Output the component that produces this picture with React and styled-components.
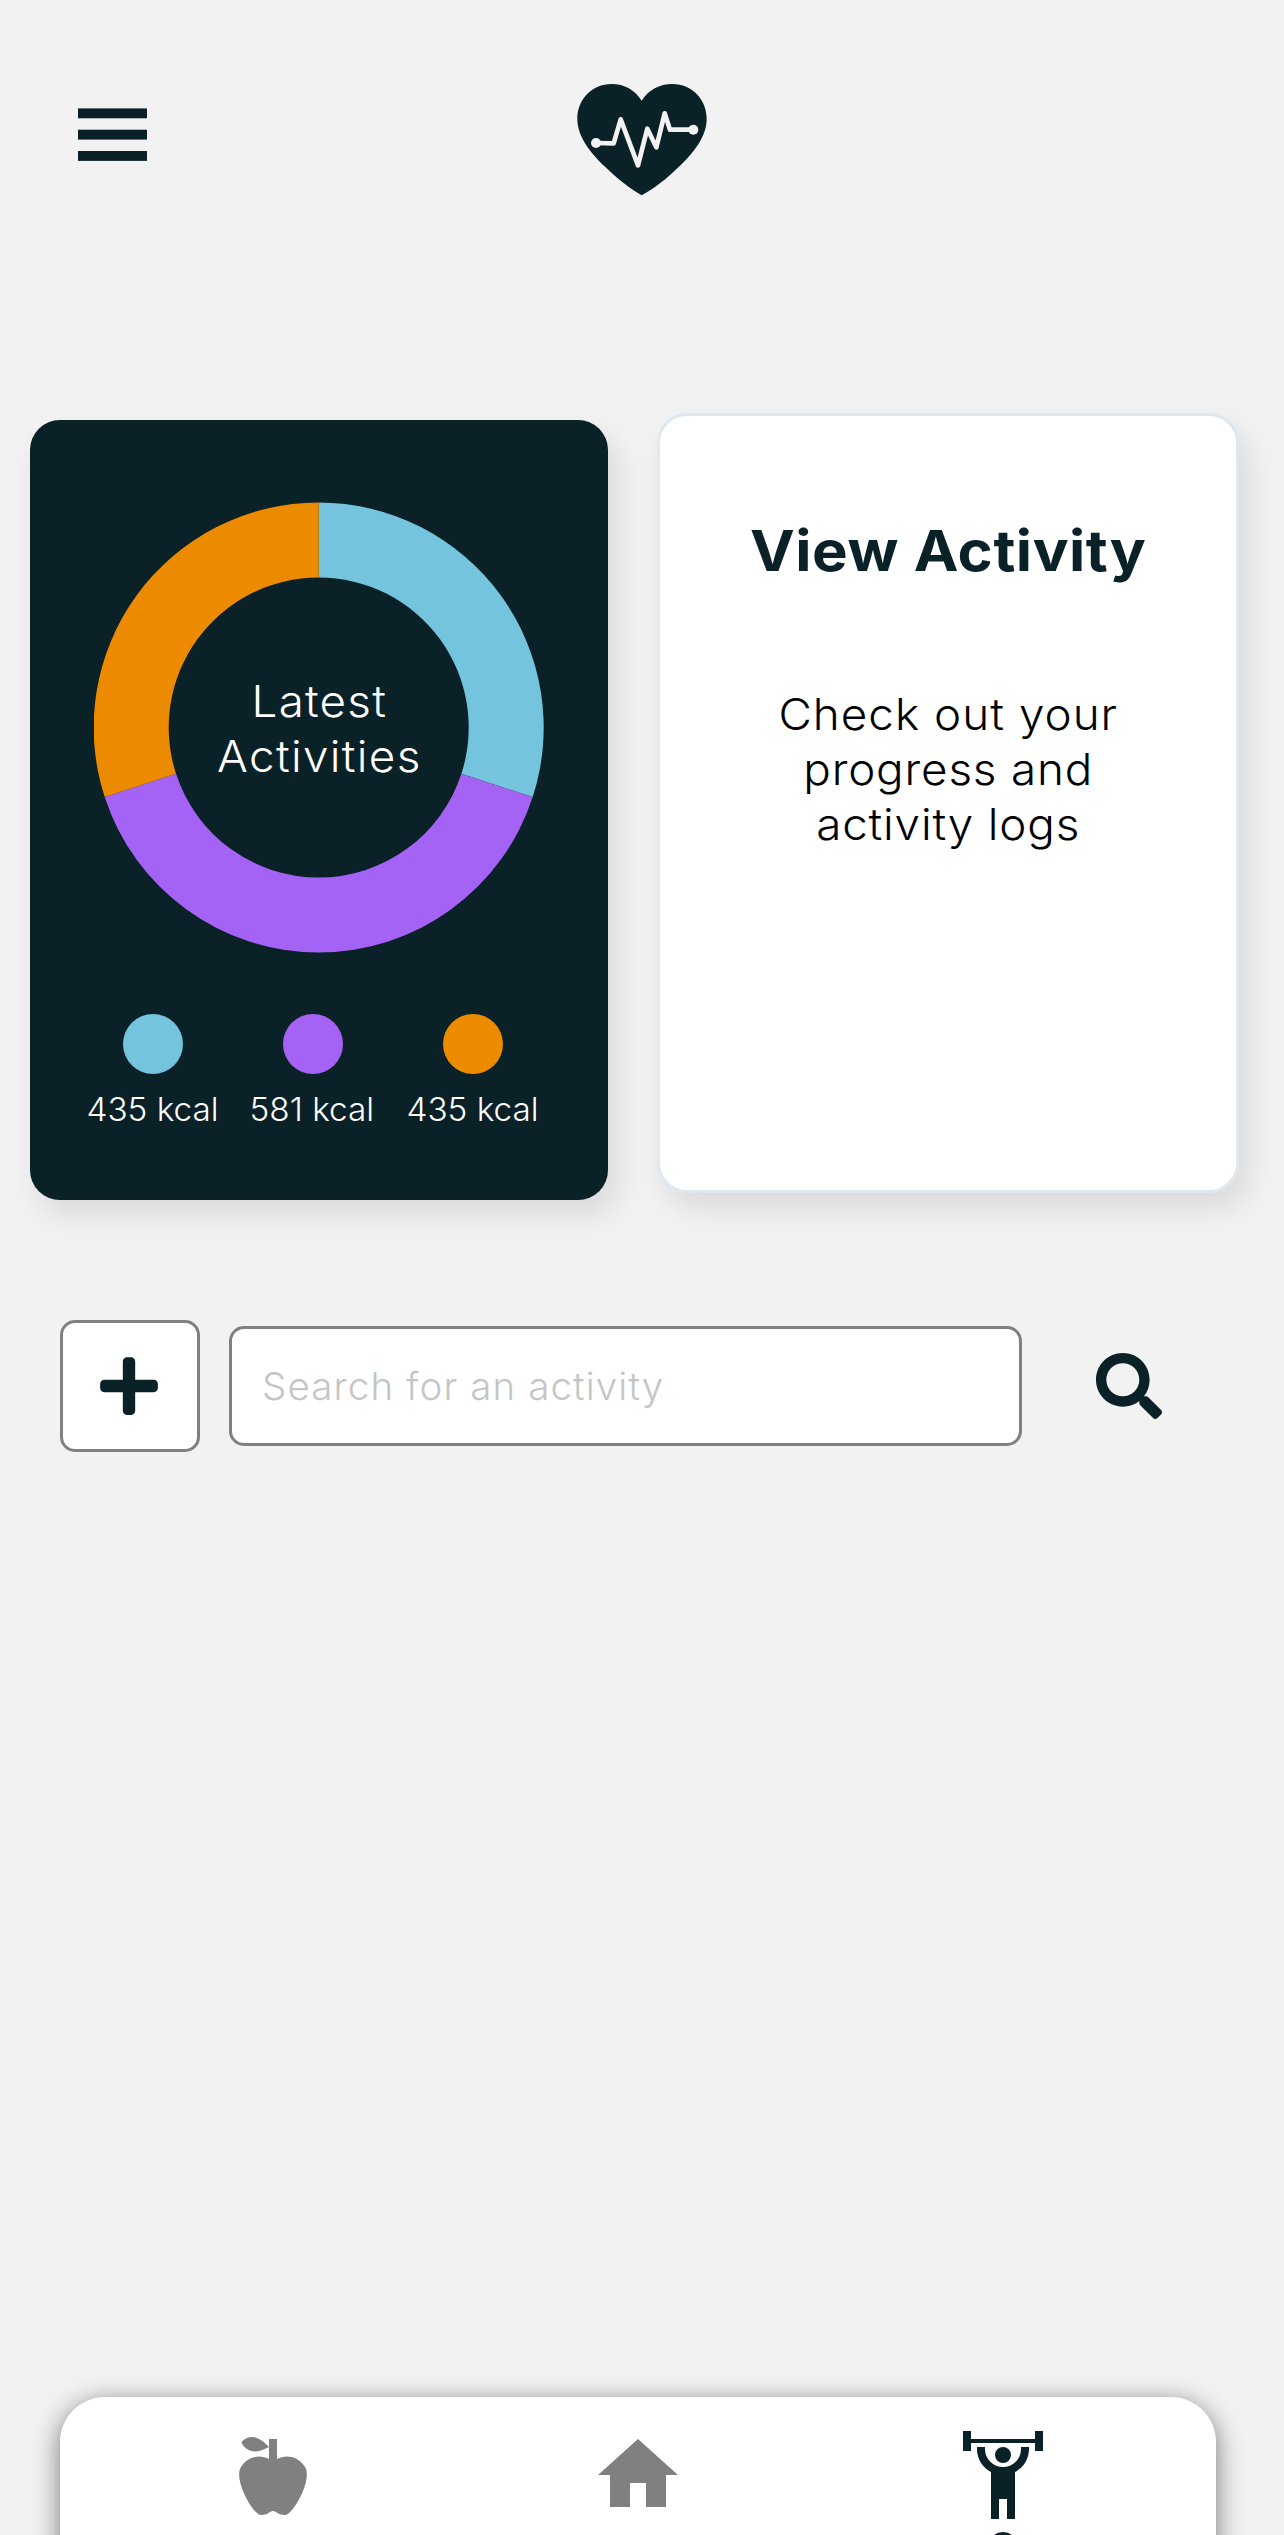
import React from "react";
import styled, { createGlobalStyle } from "styled-components";
import { FaPlus, FaSearch } from "react-icons/fa";

const INK = "#0a2127";
const GREY = "#808080";
const BLUE = "#73c4dc";
const PURPLE = "#a463f4";
const ORANGE = "#ed8b00";
const PAGE = "#f2f2f2";

const GlobalStyle = createGlobalStyle`
  *, *::before, *::after { box-sizing: border-box; }
  body { margin: 0; background: ${PAGE}; font-family: Inter, "Liberation Sans", sans-serif; }
  button { border: 0; padding: 0; background: none; display: block; color: inherit; }
  svg { display: block; }
`;

const Screen = styled.div`
  width: 1284px;
  height: 2535px;
  overflow: hidden;
  display: flex;
  flex-direction: column;
  background: ${PAGE};
  color: ${INK};
`;

const Header = styled.header`
  display: grid;
  grid-template-columns: 1fr auto 1fr;
  align-items: start;
  height: 413px;
  padding: 70px 78px 0;
`;

const MenuButton = styled.button`
  width: 69px;
  margin-top: 38px;
`;

const Cards = styled.section`
  display: flex;
  align-items: center;
  justify-content: space-between;
  height: 780px;
  padding: 0 45px 0 30px;
`;

const Card = styled.article`
  display: flex;
  flex-direction: column;
  align-items: center;
  height: 780px;
  border-radius: 30px;
  box-shadow: 9px 15px 30px rgba(0, 0, 0, 0.1);
`;

const SummaryCard = styled(Card)`
  width: 578px;
  margin-top: 14px;
  padding-top: 82px;
  background: ${INK};
  color: #fff;
`;

const ViewCard = styled(Card)`
  width: 582px;
  padding-top: 100px;
  background: #fff;
  border: 3px solid #e0e8ef;
`;

const Chart = styled.div`
  display: grid;
  place-items: center;
  width: 450px;
  height: 450px;
  > * { grid-area: 1 / 1; }
`;

const ChartLabel = styled.p`
  margin: 3px 0 0;
  font-size: 44px;
  font-weight: 330;
  line-height: 55px;
  text-align: center;
`;

const Line = styled.span`
  display: block;
  white-space: nowrap;
  letter-spacing: ${(p) => p.$spacing || 0}px;
  margin-right: ${(p) => -(p.$spacing || 0)}px;
  transform: scaleX(${(p) => p.$stretch || 1.04});
`;

const Legend = styled.ul`
  display: flex;
  width: 480px;
  margin: 62px 12px 0 0;
  padding: 0;
  list-style: none;
`;

const LegendItem = styled.li`
  display: flex;
  flex-direction: column;
  align-items: center;
  width: 160px;
  font-size: 32px;
  font-weight: 330;
  line-height: 40px;
  &::before {
    content: "";
    width: 60px;
    height: 60px;
    margin-bottom: 16px;
    border-radius: 50%;
    background: ${(p) => p.$color};
  }
`;

const LegendText = styled.div`
  padding-right: 2px;
`;

const CardTitle = styled.h2`
  margin: 0;
  font-size: 56px;
  font-weight: 700;
  line-height: 70px;
`;

const CardText = styled.p`
  margin: 101px 0 0;
  color: #000;
  font-size: 44px;
  font-weight: 330;
  line-height: 55px;
  text-align: center;
`;

const SearchRow = styled.form`
  display: flex;
  align-items: center;
  height: 132px;
  margin-top: 127px;
  padding: 0 122px 0 60px;
`;

const AddButton = styled.button.attrs({ type: "button" })`
  && {
    display: grid;
    place-items: center;
    width: 140px;
    height: 132px;
    margin-right: 29px;
    padding-right: 2px;
    border: 3px solid ${GREY};
    border-radius: 15px;
    background: #fff;
  }
`;

const SearchInput = styled.input`
  width: 793px;
  height: 120px;
  padding: 0 30px;
  border: 3px solid ${GREY};
  border-radius: 15px;
  background: #fff;
  font: 330 38.5px Inter, "Liberation Sans", sans-serif;
  letter-spacing: 1.1px;
  &::placeholder { color: #c5c5c7; opacity: 1; }
`;

const SearchButton = styled.button.attrs({ type: "button" })`
  margin-left: auto;
`;

const TabBar = styled.nav`
  display: flex;
  justify-content: center;
  gap: 269px;
  flex: none;
  width: 1156px;
  height: 240px;
  margin: auto 0 -102px 60px;
  padding-top: 30px;
  border-radius: 45px;
  background: #fff;
  box-shadow: 0 6px 27px rgba(0, 0, 0, 0.52);
`;

const Tab = styled.button`
  && {
    display: flex;
    flex-direction: column;
    align-items: center;
    gap: 9px;
    width: 96px;
    color: ${(p) => (p.$active ? INK : GREY)};
  }
  &::after {
    content: "";
    width: 30px;
    height: 30px;
    border-radius: 50%;
    background: ${(p) => (p.$active ? INK : "transparent")};
  }
`;

const tabs = [
  {
    name: "food",
    d: "M20 10C22 13 17 22 15 22C13 22 13 21 12 21C11 21 11 22 9 22C7 22 2 13 4 10C6 7 9 7 11 8V5C5.38 8.07 4.11 3.78 4.11 3.78C4.11 3.78 6.77 .19 11 5V3H13V8C15 7 18 7 20 10Z",
  },
  { name: "home", d: "M10 20V14H14V20H19V12H22L12 3L2 12H5V20H10Z" },
  {
    name: "training",
    active: true,
    d: "M12 5A2 2 0 0 1 14 7A2 2 0 0 1 12 9A2 2 0 0 1 10 7A2 2 0 0 1 12 5M22 1V6H20V4H4V6H2V1H4V3H20V1H22M15 11.26V23H13V18H11V23H9V11.26C6.93 10.17 5.5 8 5.5 5.5L5.5 5H7.5L7.5 5.5A4.5 4.5 0 0 0 12 10A4.5 4.5 0 0 0 16.5 5.5L16.5 5H18.5L18.5 5.5C18.5 8 17.07 10.17 15 11.26Z",
  },
];

const slices = [
  { color: BLUE, share: 0.3, kcal: 435 },
  { color: PURPLE, share: 0.4, kcal: 581 },
  { color: ORANGE, share: 0.3, kcal: 435 },
];

function slicePath(from, to) {
  const at = (r, t) =>
    `${(225 + r * Math.sin(t * 2 * Math.PI)).toFixed(2)} ${(225 - r * Math.cos(t * 2 * Math.PI)).toFixed(2)}`;
  return `M${at(225, from)}A225 225 0 0 1 ${at(225, to)}L${at(150, to)}A150 150 0 0 0 ${at(150, from)}Z`;
}

function Donut() {
  let start = 0;
  return (
    <svg width="450" height="451" viewBox="0.3 -0.5 450 451">
      {slices.map((s, i) => {
        const from = start;
        start += s.share;
        return <path key={i} d={slicePath(from, start)} fill={s.color} />;
      })}
    </svg>
  );
}

function MenuIcon() {
  return (
    <svg width="69" height="54" viewBox="0 0 69 54" fill={INK}>
      <rect y="0.4" width="69" height="9.9" />
      <rect y="21.7" width="69" height="9.9" />
      <rect y="43" width="69" height="9.9" />
    </svg>
  );
}

function HeartLogo() {
  return (
    <svg width="160" height="140" viewBox="6 0 480 420">
      <path
        fill={INK}
        d="M245 92C225 60 193 42 155 42C95 42 52 90 52 146C52 200 92 249 137 292C175 329 212 358 245 376C280 358 317 329 355 292C400 249 440 200 440 146C440 90 397 42 337 42C299 42 265 60 245 92Z"
      />
      <polyline
        points="108,219 161,220 182,148 234,286 262,176 289,232 314,130 330,179 400,179"
        fill="none"
        stroke={PAGE}
        strokeWidth="14"
        strokeLinejoin="round"
      />
      <circle cx="108" cy="219" r="15" fill={PAGE} />
      <circle cx="400" cy="179" r="15" fill={PAGE} />
    </svg>
  );
}

export default function App() {
  return (
    <Screen>
      <GlobalStyle />
      <Header>
        <MenuButton aria-label="Menu">
          <MenuIcon />
        </MenuButton>
        <HeartLogo />
      </Header>

      <Cards>
        <SummaryCard>
          <Chart>
            <Donut />
            <ChartLabel>
              <Line $spacing={1.2}>Latest</Line>
              <Line $spacing={1.3}>Activities</Line>
            </ChartLabel>
          </Chart>
          <Legend>
            {slices.map((s, i) => (
              <LegendItem key={i} $color={s.color}>
                <LegendText>
                  <Line>{s.kcal} kcal</Line>
                </LegendText>
              </LegendItem>
            ))}
          </Legend>
        </SummaryCard>
        <ViewCard>
          <CardTitle>
            <Line $stretch={1.07} $spacing={0.5}>View Activity</Line>
          </CardTitle>
          <CardText>
            <Line $spacing={1}>Check out your</Line>
            <Line $spacing={0.8}>progress and</Line>
            <Line $spacing={0.8}>activity logs</Line>
          </CardText>
        </ViewCard>
      </Cards>

      <SearchRow>
        <AddButton aria-label="Add">
          <FaPlus size={66} />
        </AddButton>
        <SearchInput placeholder="Search for an activity" />
        <SearchButton aria-label="Search">
          <FaSearch size={66} color={INK} />
        </SearchButton>
      </SearchRow>

      <TabBar>
        {tabs.map((t) => (
          <Tab key={t.name} $active={t.active} aria-label={t.name}>
            <svg width="96" height="96" viewBox="0 0 24 24" fill="currentColor">
              <path d={t.d} />
            </svg>
          </Tab>
        ))}
      </TabBar>
    </Screen>
  );
}
